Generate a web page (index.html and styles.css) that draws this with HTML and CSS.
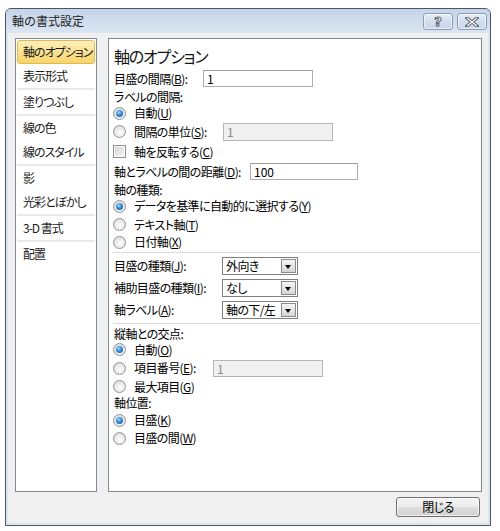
FILE: index.html
```html
<!DOCTYPE html>
<html lang="ja">
<head>
<meta charset="utf-8">
<title>軸の書式設定</title>
<link rel="stylesheet" href="styles.css">
</head>
<body>
<div class="window">
  <div class="titlebar">
    <span class="title">軸の書式設定</span>
    <div class="tb-buttons">
      <div class="tb-btn help">?</div>
      <div class="tb-btn close">
        <svg width="14" height="10" viewBox="0 0 14 10">
          <path d="M2 1 L12 9 M12 1 L2 9" stroke="#5b5f66" stroke-width="3.2" stroke-linecap="square" fill="none"/>
          <path d="M2 1 L12 9 M12 1 L2 9" stroke="#ffffff" stroke-width="1.3" stroke-linecap="butt" fill="none"/>
        </svg>
      </div>
    </div>
  </div>

  <div class="body">
    <div class="nav">
      <div class="nav-item selected">軸のオプション</div>
      <div class="nav-item">表示形式</div>
      <div class="nav-sep"></div>
      <div class="nav-item">塗りつぶし</div>
      <div class="nav-sep"></div>
      <div class="nav-item">線の色</div>
      <div class="nav-item">線のスタイル</div>
      <div class="nav-sep"></div>
      <div class="nav-item">影</div>
      <div class="nav-item">光彩とぼかし</div>
      <div class="nav-sep"></div>
      <div class="nav-item">3-D 書式</div>
      <div class="nav-sep"></div>
      <div class="nav-item">配置</div>
    </div>

    <div class="panel">
      <div class="heading">軸のオプション</div>

      <div class="row h19 mt3">
        <span class="lbl w90">目盛の間隔(<u>B</u>):</span>
        <span class="textbox w110">1</span>
      </div>
      <div class="row h17"><span class="lbl">ラベルの間隔:</span></div>
      <div class="row h16"><span class="radio on"></span><span class="txt">自動(<u>U</u>)</span></div>
      <div class="row h21">
        <span class="radio"></span><span class="txt w89">間隔の単位(<u>S</u>):</span>
        <span class="textbox disabled w110 h18">1</span>
      </div>
      <div class="row h19"><span class="check"></span><span class="txt">軸を反転する(<u>C</u>)</span></div>
      <div class="row h21">
        <span class="lbl w137">軸とラベルの間の距離(<u>D</u>):</span>
        <span class="textbox w108">100</span>
      </div>
      <div class="row h15"><span class="lbl">軸の種類:</span></div>
      <div class="row h18"><span class="radio on"></span><span class="txt">データを基準に自動的に選択する(<u>Y</u>)</span></div>
      <div class="row h19"><span class="radio"></span><span class="txt">テキスト軸(<u>T</u>)</span></div>
      <div class="row h16"><span class="radio"></span><span class="txt">日付軸(<u>X</u>)</span></div>

      <div class="sep"></div>

      <div class="row h22">
        <span class="lbl w109">目盛の種類(<u>J</u>):</span>
        <span class="combo"><span class="combo-text">外向き</span><span class="combo-btn"></span></span>
      </div>
      <div class="row h22">
        <span class="lbl w109">補助目盛の種類(<u>I</u>):</span>
        <span class="combo"><span class="combo-text">なし</span><span class="combo-btn"></span></span>
      </div>
      <div class="row h22">
        <span class="lbl w109">軸ラベル(<u>A</u>):</span>
        <span class="combo"><span class="combo-text">軸の下/左</span><span class="combo-btn"></span></span>
      </div>

      <div class="sep"></div>

      <div class="row h16"><span class="lbl">縦軸との交点:</span></div>
      <div class="row h15"><span class="radio on"></span><span class="txt">自動(<u>O</u>)</span></div>
      <div class="row h22">
        <span class="radio"></span><span class="txt w79">項目番号(<u>E</u>):</span>
        <span class="textbox disabled w110">1</span>
      </div>
      <div class="row h15"><span class="radio"></span><span class="txt">最大項目(<u>G</u>)</span></div>
      <div class="row h17"><span class="lbl">軸位置:</span></div>
      <div class="row h18"><span class="radio on"></span><span class="txt">目盛(<u>K</u>)</span></div>
      <div class="row h18"><span class="radio"></span><span class="txt">目盛の間(<u>W</u>)</span></div>
    </div>
  </div>

  <div class="footer">
    <div class="btn">閉じる</div>
  </div>
</div>
</body>
</html>
```

FILE: styles.css
```css
* { box-sizing: border-box; }

html, body {
  margin: 0;
  padding: 0;
  background: #ffffff;
}

body {
  font-family: "Noto Sans CJK JP", "Noto Sans", sans-serif;
  font-size: 12px;
  color: #000;
  font-feature-settings: "palt";
  letter-spacing: -0.6px;
}

u {
  text-decoration: underline;
  text-underline-offset: 1px;
  text-decoration-thickness: 1px;
}

.window {
  margin: 8px 0 0 5px;
  width: 486px;
  height: 518px;
  border: 1px solid #4b5565;
  border-radius: 6px 6px 0 0;
  background: #f0f0f0;
  box-shadow: inset 0 0 0 2px #dbe5f2;
  display: flex;
  flex-direction: column;
  overflow: hidden;
}

/* title bar */
.titlebar {
  height: 24px;
  flex: none;
  display: flex;
  align-items: center;
  padding-left: 6px;
  background: linear-gradient(#c5d4e8, #dae5f2);
  border-radius: 5px 5px 0 0;
}

.title {
  font-size: 12px;
  line-height: 16px;
  color: #1e1e1e;
  letter-spacing: 0;
  font-feature-settings: normal;
}

.tb-buttons {
  margin-left: auto;
  align-self: flex-start;
  margin-top: 4px;
  padding-right: 3px;
  display: flex;
  gap: 4px;
}

.tb-btn {
  width: 30px;
  height: 17px;
  border: 1px solid #8b9bb2;
  border-radius: 3px;
  background: linear-gradient(#e6edf6, #d2deed 50%, #c9d7ea);
  box-shadow: inset 0 0 0 1px rgba(255,255,255,0.55);
  display: flex;
  align-items: center;
  justify-content: center;
}

.help {
  font-family: "DejaVu Sans", sans-serif;
  font-weight: bold;
  font-size: 13px;
  line-height: 13px;
  letter-spacing: 0;
  color: #ffffff;
  -webkit-text-stroke: 1px #5b5f66;
}

/* body */
.body {
  display: flex;
  gap: 11px;
  padding: 5px 0 0 9px;
  flex: none;
}

.nav {
  width: 82px;
  height: 454px;
  background: #fff;
  border: 1px solid #828790;
  padding: 1px 1px 0 1px;
}

.nav-item {
  height: 24px;
  line-height: 22px;
  padding-left: 5px;
  border: 1px solid transparent;
  font-size: 12px;
  letter-spacing: -1px;
  color: #1a1a1a;
  white-space: nowrap;
}

.nav-item.selected {
  background: linear-gradient(#fdefbd, #fbe08d 55%, #f8d36a);
  border-color: #e0b94f;
  border-radius: 3px;
}

.nav-sep {
  height: 2px;
  background: #e9e9e9;
}

.panel {
  width: 374px;
  height: 454px;
  background: #fff;
  border: 1px solid #828790;
  padding: 0 1px 0 4px;
}

.heading {
  margin-top: 7px;
  height: 20px;
  line-height: 20px;
  font-size: 16px;
  letter-spacing: -1.2px;
  padding-left: 1px;
  color: #111;
}

.row {
  display: flex;
  align-items: center;
  white-space: nowrap;
}

.h15 { height: 15px; }
.h16 { height: 16px; }
.h17 { height: 17px; }
.h18 { height: 18px; }
.h19 { height: 19px; }
.h21 { height: 21px; }
.h22 { height: 22px; }
.mt3 { margin-top: 3px; }

.lbl, .txt {
  line-height: 16px;
  flex: none;
}

.lbl { padding-left: 1px; }

.w79 { width: 79px; }
.w89 { width: 89px; }
.w90 { width: 90px; }
.w109 { width: 109px; }
.w137 { width: 137px; }

.textbox {
  height: 17px;
  border: 1px solid #abadb3;
  border-top-color: #9a9ca3;
  background: #fff;
  padding-left: 3px;
  line-height: 15px;
  font-size: 12px;
  letter-spacing: 0;
  flex: none;
}

.textbox.w110 { width: 110px; }
.textbox.w108 { width: 108px; }
.textbox.h18 { height: 18px; line-height: 16px; }

.textbox.disabled {
  background: #f0f0f0;
  border-color: #b5b5b5;
  color: #8a8a8a;
}

/* radio */
.radio {
  width: 13px;
  height: 13px;
  flex: none;
  margin-right: 8px;
  border-radius: 50%;
  border: 1px solid #939393;
  background: radial-gradient(circle at 55% 60%, #ffffff 0%, #ececec 45%, #cfcfcf 100%);
  position: relative;
}

.radio.on::after {
  content: "";
  position: absolute;
  left: 2px;
  top: 2px;
  width: 7px;
  height: 7px;
  border-radius: 50%;
  background: radial-gradient(circle at 40% 35%, #a8dcff 0%, #3d8fdc 40%, #124f96 100%);
}

/* checkbox */
.check {
  width: 13px;
  height: 13px;
  flex: none;
  margin-right: 8px;
  border: 1px solid #8f8f8f;
  background: linear-gradient(135deg, #d2d2d2, #f6f6f6);
  box-shadow: inset 0 0 0 1px #fff;
}

/* separators */
.sep {
  height: 1px;
  margin: 2px 0;
  background: #dcdcdc;
}

/* combo box */
.combo {
  width: 76px;
  height: 18px;
  border: 1px solid #7f7f7f;
  background: #fff;
  display: flex;
  align-items: center;
  flex: none;
  padding: 1px;
}

.combo-text {
  flex: 1;
  min-width: 0;
  padding-left: 2px;
  line-height: 16px;
  white-space: nowrap;
}

.combo-btn {
  width: 15px;
  height: 14px;
  border: 1px solid #8a8a8a;
  background: linear-gradient(#f6f6f6, #e4e4e4 55%, #d6d6d6);
  position: relative;
  flex: none;
}

.combo-btn::after {
  content: "";
  position: absolute;
  left: 3px;
  top: 5px;
  border-left: 3.5px solid transparent;
  border-right: 3.5px solid transparent;
  border-top: 4px solid #000;
}

/* footer */
.footer {
  display: flex;
  justify-content: flex-end;
  padding: 5px 10px 0 0;
}

.btn {
  width: 84px;
  height: 20px;
  border: 1px solid #707070;
  border-radius: 3px;
  background: linear-gradient(#f4f4f4, #ebebeb 48%, #dddddd 52%, #d0d0d0);
  box-shadow: inset 0 0 0 1px rgba(255,255,255,0.7);
  display: flex;
  align-items: center;
  justify-content: center;
  font-size: 12px;
  line-height: 14px;
}
```
